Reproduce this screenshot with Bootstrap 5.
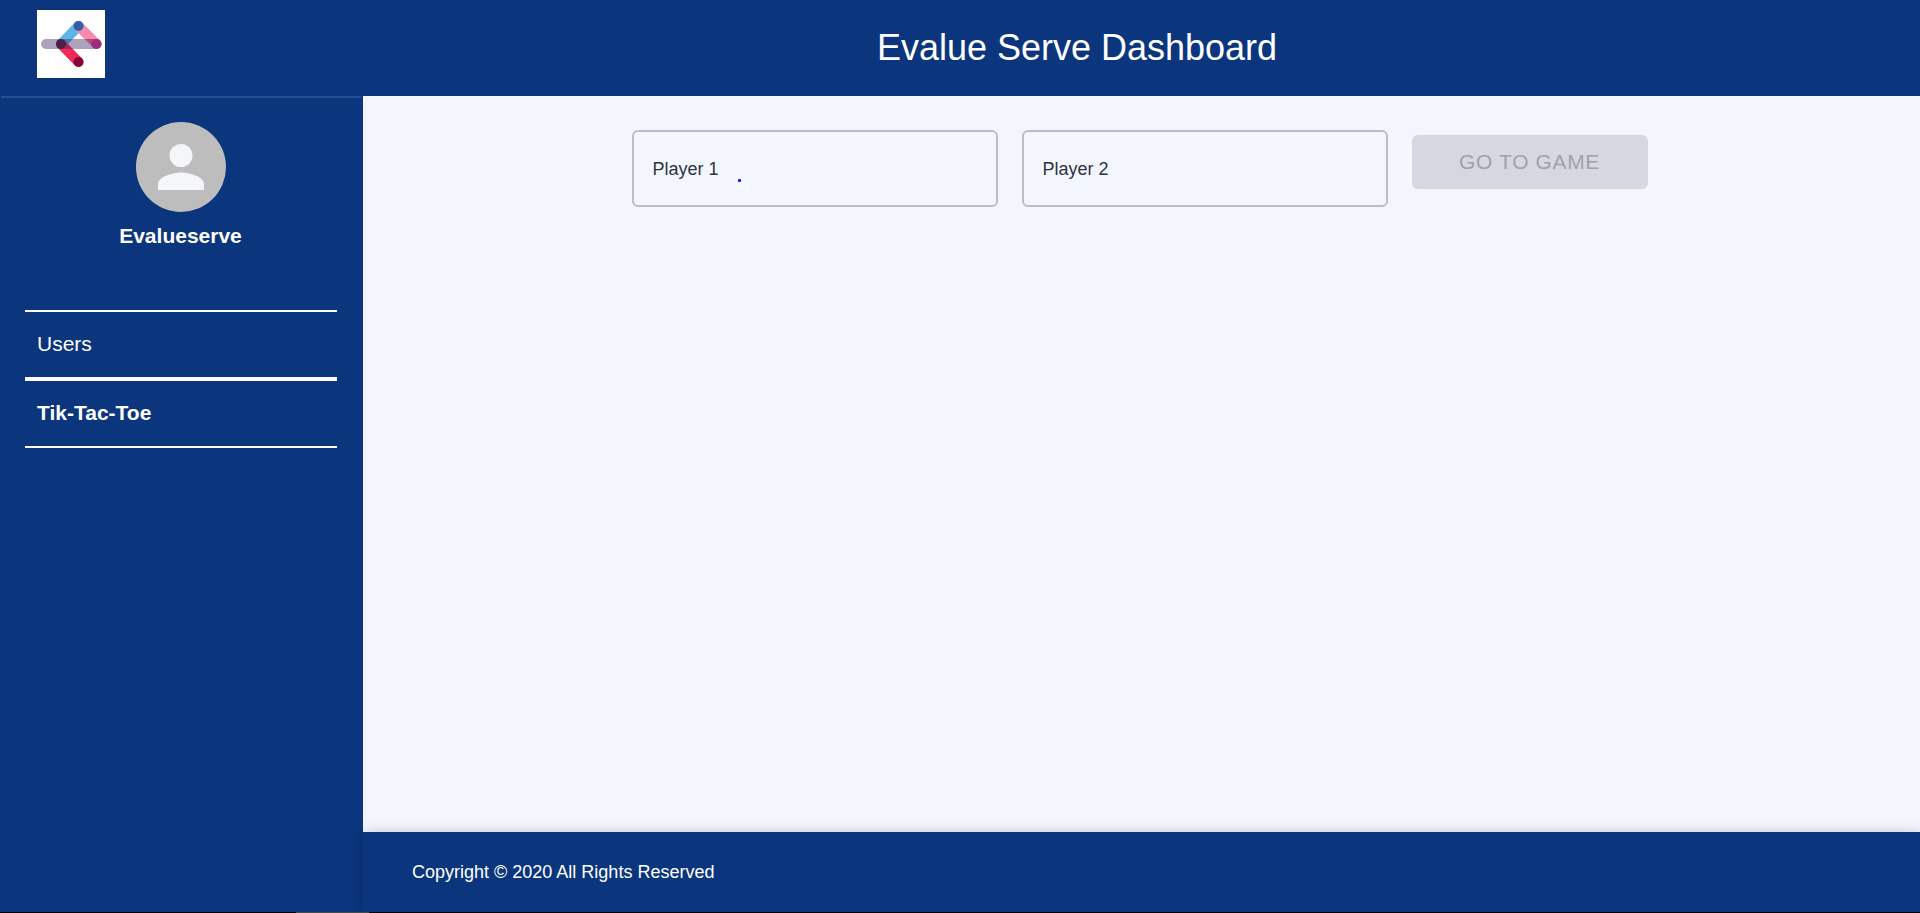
<!DOCTYPE html>
<html lang="en">
<head>
<meta charset="utf-8">
<meta name="viewport" content="width=device-width, initial-scale=1">
<title>Evalue Serve Dashboard</title>
<link href="https://cdn.jsdelivr.net/npm/bootstrap@5.3.0/dist/css/bootstrap.min.css" rel="stylesheet">
<style>
  :root { --navy: #0b357c; --page: #f3f6ff; }
  body { font-family: "Liberation Sans", Arial, sans-serif; background: var(--page); }
  .navy { background: var(--navy); color: #fff; }
  .topbar { height: 96px; }
  .brand-area { width: 234px; padding: 10px 37px 18px; }
  .brand-area svg { display: block; }
  .page-title { font-size: 36px; line-height: 40px; }
  .sidebar { width: 363px; }
  .side-rule { height: 2px; margin: 0 2px 0 1px; background: #264f92; }
  .profile { padding: 24px 2px 0 0; }
  .user-name { font-size: 21px; line-height: 24px; margin-top: 12px; }
  .menu { margin: 62px 26px 0 25px; }
  .menu .nav-link { font-size: 21px; line-height: 25px; padding: 19px 12px 21px; color: #fff; border-top: 2px solid #fff; border-bottom: 2px solid #fff; }
  .players { gap: 24px; padding: 34px 24px; }
  .player-field { width: 366px; }
  .player-field .form-control { height: 77px; padding: 0 19px; font-size: 18px; border: 2px solid #b9bdc6; border-radius: 6px; background: transparent; }
  .player-field label { position: absolute; left: 21px; top: 27px; font-size: 18px; line-height: 24px; color: #2d333d; pointer-events: none; }
  .player-field .form-control:focus ~ label,
  .player-field .form-control:not(:placeholder-shown) ~ label { top: 3px; font-size: 14px; }
  .ink-dot { position: absolute; left: 106px; top: 49px; width: 3px; height: 3px; border-radius: 1px; background: #1a0dff; }
  .game-btn, .game-btn:disabled { width: 236px; height: 54px; margin-top: 5px; padding: 0; font-size: 21px; letter-spacing: .03em; color: #a0a2a8; background: #d5d8e0; border: 0; border-radius: 6px; opacity: 1; }
  .site-footer { padding: 28px 49px; font-size: 18px; line-height: 24px; box-shadow: 0 0 12px rgba(0, 0, 0, .18); }
  .bottom-strip { height: 1px; background: #000; }
  .bottom-strip span { display: block; height: 1px; width: 73px; margin-left: 296px; background: #4a4a4a; }
</style>
</head>
<body>
<div class="d-flex flex-column min-vh-100">
  <header class="navy topbar d-flex">
    <a href="#" class="brand-area flex-shrink-0" aria-label="Evalueserve home">
      <svg width="68" height="68" viewBox="0 0 68 68" aria-hidden="true">
        <rect width="68" height="68" fill="#fff"/>
        <g fill="none" stroke-width="10" stroke-linecap="round">
          <path d="M24 34 41.500 16" stroke="#5cb5e8"/>
          <path d="M41.500 16 59.500 34" stroke="#f589ae"/>
          <path d="M24 34 41.500 52" stroke="#f02a55"/>
          <path d="M9 34H59.500" stroke="#3f2765" stroke-opacity=".43"/>
        </g>
        <path d="M49 29H58L63 34L59 39Z" fill="#b5386f" opacity=".6"/>
        <circle cx="41.500" cy="16" r="5" fill="#325fa9"/>
        <circle cx="24" cy="34" r="5" fill="#472349"/>
        <circle cx="59.500" cy="34" r="5" fill="#9e2b7c"/>
        <circle cx="41.500" cy="52" r="5" fill="#86053a"/>
      </svg>
    </a>
    <h1 class="page-title fw-normal flex-grow-1 text-center align-self-center mb-0">Evalue Serve Dashboard</h1>
  </header>
  <div class="d-flex flex-grow-1">
    <aside class="navy sidebar flex-shrink-0">
      <div class="side-rule"></div>
      <div class="profile text-center">
        <svg class="d-block mx-auto" width="90" height="90" viewBox="0 0 90 90" aria-hidden="true">
          <circle cx="45" cy="45" r="45" fill="#bdbdbd"/>
          <circle cx="45" cy="33.500" r="11.500" fill="#f5f6f9"/>
          <path d="M22 68V62C22 54.500 37.500 50.500 45 50.500S68 54.500 68 62V68Z" fill="#f5f6f9"/>
        </svg>
        <div class="user-name fw-bold">Evalueserve</div>
      </div>
      <nav class="menu nav flex-column" aria-label="Main">
        <a class="nav-link" href="#">Users</a>
        <a class="nav-link fw-bold" href="#" aria-current="page">Tik-Tac-Toe</a>
      </nav>
    </aside>
    <div class="d-flex flex-column flex-grow-1">
      <main class="flex-grow-1">
        <form class="players d-flex flex-wrap justify-content-center align-items-start me-1">
          <div class="player-field position-relative">
            <input class="form-control" id="player1" type="text" placeholder=" ">
            <label for="player1">Player 1</label>
            <span class="ink-dot"></span>
          </div>
          <div class="player-field position-relative">
            <input class="form-control" id="player2" type="text" placeholder=" ">
            <label for="player2">Player 2</label>
          </div>
          <button class="btn game-btn" type="submit" disabled>GO TO GAME</button>
        </form>
      </main>
      <footer class="navy site-footer">Copyright © 2020 All Rights Reserved</footer>
    </div>
  </div>
  <div class="bottom-strip"><span></span></div>
</div>
<script src="https://cdn.jsdelivr.net/npm/bootstrap@5.3.0/dist/js/bootstrap.bundle.min.js"></script>
</body>
</html>
